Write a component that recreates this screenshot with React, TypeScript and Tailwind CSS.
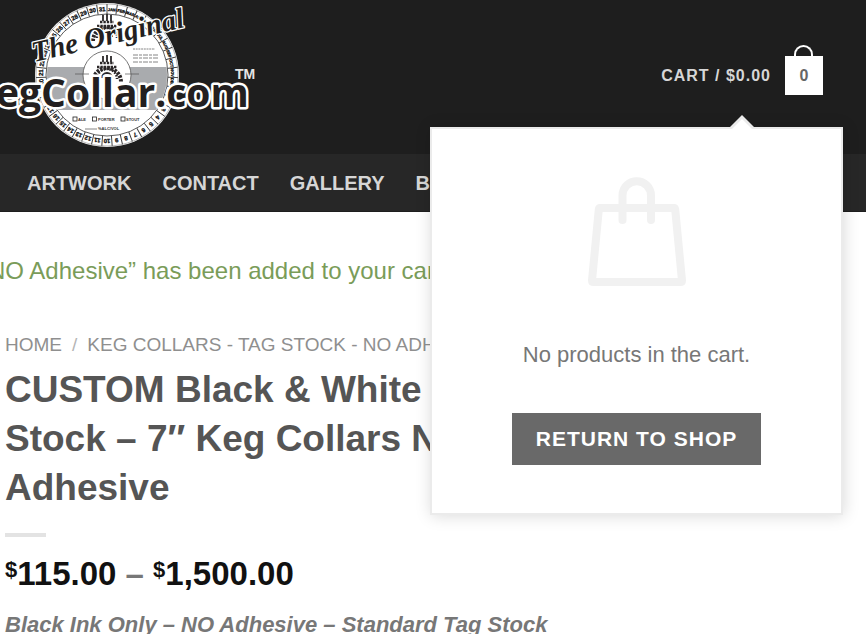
const navItems = ['ARTWORK', 'CONTACT', 'GALLERY', 'BLOG'];

const months = ['JAN', 'FEB', 'MAR', 'APR', 'MAY', 'JUN', 'JUL', 'AUG', 'SEP', 'OCT', 'NOV', 'DEC'];
const wheel = [...months, ...Array.from({ length: 31 }, (_, i) => String(i + 1))];
const step = 360 / wheel.length;

function Crest() {
  return (
    <g fill="none" stroke="#2b2728">
      <path d="M-4 -14v6M0 -15v7M4 -14v6" strokeWidth="1.8" />
      <path d="M-7 -7h14M-10 -3h20" strokeWidth="2.4" strokeDasharray="2.4 1" />
      <path d="M-14 12a14 14 0 0 1 28 0" strokeWidth="4" strokeDasharray="2.5 1.2" />
      <path d="M-10 9a10 10 0 0 1 20 0" strokeWidth="2.5" strokeDasharray="1.6 1.4" />
      <path d="M-5 8a5 5 0 0 1 10 0" strokeWidth="2" />
    </g>
  );
}

function Logo() {
  return (
    <svg viewBox="0 0 270 154" className="block h-[154px] w-[270px]" role="img" aria-label="The Original KegCollar.com">
      <circle cx="107" cy="75" r="72" fill="#fff" />
      <clipPath id="disc">
        <circle cx="107" cy="75" r="60" />
      </clipPath>
      <rect x="40" y="67" width="134" height="43" fill="#a9abae" clipPath="url(#disc)" />
      <circle cx="107" cy="75" r="61" fill="none" stroke="#333" strokeWidth="0.8" />
      <circle cx="107" cy="75" r="71" fill="none" stroke="#777" strokeWidth="0.5" />
      {wheel.map((label, i) => (
        <g key={label} transform={`rotate(${i * step} 107 75)`}>
          <path d="M107 4v10" stroke="#333" strokeWidth="0.9" />
          <text
            x="107"
            y="11"
            transform={`rotate(${step / 2} 107 75)`}
            textAnchor="middle"
            fontSize={i < 12 ? 4 : 6}
            fontWeight="900"
            fill="#111"
            stroke="#111"
            strokeWidth="0.3"
          >
            {label}
          </text>
        </g>
      ))}
      <g transform="translate(107 29)"><Crest /></g>
      <circle cx="107" cy="75" r="24" fill="#fff" stroke="#555" strokeWidth="0.8" />
      <path d="M75 74h14M125 74h14" stroke="#555" strokeWidth="0.7" />
      <g transform="translate(107 70)"><Crest /></g>
      <path d="M105 84v25M109 84v25" stroke="#555" strokeWidth="0.8" strokeDasharray="2 1" />
      <g stroke="#777" strokeWidth="0.9" strokeDasharray="2 0.7">
        <path d="M133 49h22" />
        <path d="M133 55h26M133 58h26M133 62h26" strokeDasharray="5 1 3 1" />
        <path d="M85 129h12" strokeDasharray="none" />
      </g>
      <g fill="#fff" stroke="#222" strokeWidth="0.8">
        <rect x="73" y="117" width="4" height="4" />
        <rect x="92.500" y="117" width="4" height="4" />
        <rect x="121" y="117" width="4" height="4" />
      </g>
      <g fontSize="4" fontWeight="700" fill="#333">
        <text x="78" y="121">ALE</text>
        <text x="98" y="121">PORTER</text>
        <text x="126" y="121">STOUT</text>
        <text x="98" y="130">%ALC/VOL</text>
      </g>
      <g fill="#231f20" stroke="#fff" strokeLinejoin="round" paintOrder="stroke">
        <text
          x="34"
          y="62"
          transform="rotate(-13 34 62)"
          fontFamily="'Liberation Serif', serif"
          fontSize="29"
          fontStyle="italic"
          fontWeight="700"
          strokeWidth="2.5"
        >
          The Original
        </text>
        <text x="-4" y="107" fontFamily="'Open Sans', sans-serif" fontSize="39" fontWeight="700" strokeWidth="5">
          egCollar.com
        </text>
      </g>
      <text x="235" y="79" fontSize="14" fontWeight="700" fill="#e5e5e5">TM</text>
    </svg>
  );
}

function BagOutline() {
  return (
    <svg viewBox="0 0 98 110" className="h-[110px] w-[98px]" fill="none" stroke="#f1f1f1" strokeWidth="8" aria-hidden="true">
      <path d="M12 31h74q1 0 1.200 1.500L94 103.500q0 1.500-1.500 1.500h-87q-1.500 0-1.500-1.500L10.800 32.500Q11 31 12 31Z" strokeLinejoin="round" />
      <path d="M34.500 43V18.500a14.250 14.250 0 0 1 28.500 0V43" strokeLinecap="round" />
    </svg>
  );
}

function MiniCart() {
  return (
    <div className="absolute top-full -right-5 z-10 mt-8 w-[413px] border-2 border-[#ebebeb] bg-white text-center shadow-[1px_1px_15px_rgba(0,0,0,0.15)]">
      <svg viewBox="0 0 26 14" className="absolute -top-[14px] left-[297px] h-[14px] w-[26px]" aria-hidden="true">
        <path d="M0 13L13 0l13 13v1H0Z" fill="#ebebeb" />
        <path d="M3 14L13 4l10 10Z" fill="#fff" />
      </svg>
      <div className="flex flex-col items-center pt-12 pb-12">
        <BagOutline />
        <p className="mt-[52px] text-[22px] leading-8 text-[#777]">No products in the cart.</p>
        <button type="button" className="mt-[42px] h-[52px] bg-[#696969] px-6 text-[21px] font-bold tracking-[1px] text-white">
          RETURN TO SHOP
        </button>
      </div>
    </div>
  );
}

function Header() {
  return (
    <header>
      <div className="flex items-start justify-between bg-[#1e1e1e] pr-[43px]">
        <a href="#home"><Logo /></a>
        <div className="relative mt-14">
          <a href="#cart" className="flex items-center gap-[14px] text-[#d6d6d6]">
            <span className="text-base font-bold tracking-[1px]">CART / $0.00</span>
            <span className="relative flex h-[39px] w-[38px] items-center justify-center bg-white text-base font-bold text-[#666]">
              <span className="absolute bottom-full left-[9px] h-[11px] w-[19px] rounded-t-full border-2 border-b-0 border-white" />
              0
            </span>
          </a>
          <MiniCart />
        </div>
      </div>
      <nav className="flex h-[58px] items-center gap-[31px] border-b border-[#1e1e1e] bg-[#272727] pl-[27px] text-xl font-bold text-[#d6d6d6]">
        {navItems.map((item) => (
          <a key={item} href={`#${item.toLowerCase()}`}>{item}</a>
        ))}
      </nav>
    </header>
  );
}

export default function App() {
  return (
    <div className="min-h-screen overflow-hidden bg-white font-['Liberation_Sans',Arial,sans-serif] text-[#777]">
      <Header />
      <p className="-ml-3 pt-[43px] text-2xl leading-8 text-[#7a9c59]">NO Adhesive” has been added to your cart.</p>
      <main className="pl-[5px]">
        <nav aria-label="Breadcrumb" className="mt-[46px] flex gap-[10px] text-[19px] leading-6 text-[#8f8f8f]">
          <a href="#home">HOME</a>
          <span className="text-[#b5b5b5]">/</span>
          <a href="#keg-collars">KEG COLLARS - TAG STOCK - NO ADHESIVE</a>
        </nav>
        <h1 className="mt-2 max-w-[520px] text-[37px] leading-[49px] font-bold text-[#555]">
          CUSTOM Black &amp; White Tag Stock – 7″ Keg Collars NO Adhesive
        </h1>
        <div className="mt-[21px] h-1 w-[41px] bg-[#e3e3e3]" />
        <p className="mt-4 text-[33px] leading-[42px] font-bold">
          <span className="text-[#111]"><sup className="-top-2 text-[22px]">$</sup>115.00</span>
          {' – '}
          <span className="text-[#111]"><sup className="-top-2 text-[22px]">$</sup>1,500.00</span>
        </p>
        <p className="mt-[14px] text-[22px] leading-8 font-bold italic">Black Ink Only – NO Adhesive – Standard Tag Stock</p>
      </main>
    </div>
  );
}
